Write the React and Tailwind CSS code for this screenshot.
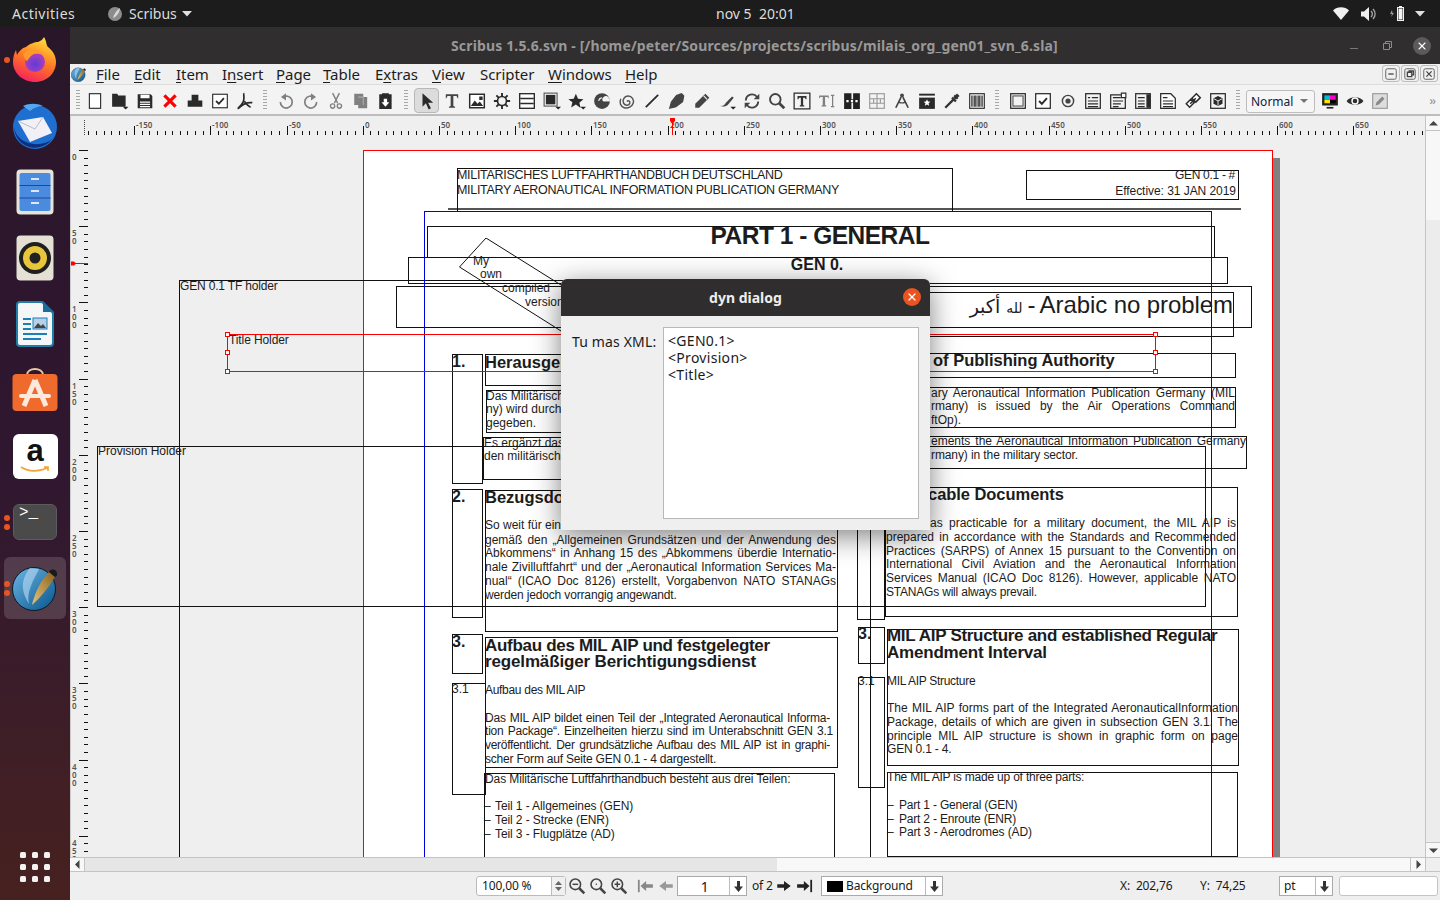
import { X } from 'lucide-react'

const ORIGIN_X = 88
const ORIGIN_Y = 135
const UI_FONT = "font-['Noto_Sans',sans-serif]"
const DOC_FONT = "font-['Liberation_Sans','DejaVu_Sans',sans-serif]"

// frames on the page: x1, y1, x2, y2
const FRAMES = [
  [457, 168, 952, 211], [1026, 170, 1238, 199], [427, 226, 1214, 257], [408, 257, 1227, 283],
  [396, 286, 1251, 327], [700, 292, 1233, 336], [179, 280, 870, 1000], [97, 446, 1205, 606],
  [452, 354, 482, 483], [485, 354, 700, 385], [700, 353, 1235, 377], [486, 390, 700, 432],
  [483, 437, 700, 479], [700, 387, 1235, 427], [700, 436, 1246, 468],
  [452, 489, 482, 617], [485, 490, 837, 631], [452, 634, 482, 673], [485, 637, 837, 767],
  [452, 683, 485, 794], [484, 773, 834, 1000],
  [857, 489, 884, 619], [885, 487, 1237, 616], [858, 627, 884, 663], [887, 629, 1238, 765],
  [858, 677, 884, 787], [887, 772, 1237, 856],
]

// text on the page: x, centre y, text, size, extra
const TEXTS = [
  [457, 175, 'MILITARISCHES LUFTFAHRTHANDBUCH DEUTSCHLAND', 12.5, { ls: '-0.3px' }],
  [457, 190, 'MILITARY AERONAUTICAL INFORMATION PUBLICATION GERMANY', 12.5, { ls: '-0.31px' }],
  [1026, 174.5, 'GEN 0.1 - #', 12, { right: 1235, ls: '-0.3px' }],
  [1026, 190.5, 'Effective: 31 JAN 2019', 12, { right: 1236, ls: '-0.05px' }],
  [600, 235, 'PART 1 - GENERAL', 24.5, { center: 820, bold: true, ls: '-0.5px' }],
  [600, 265, 'GEN 0.', 16, { center: 817, bold: true }],
  [473, 261, 'My', 12], [480, 274, 'own', 12], [502, 288, 'compiled', 12], [525, 302, 'version', 12],
  [180, 286, 'GEN 0.1 TF holder', 12, { ls: '-0.17px' }],
  [229, 340, 'Title Holder', 12, { ls: '-0.1px' }],
  [98, 451, 'Provision Holder', 12, { ls: '0px' }],
  [452, 362, '1.', 16, { bold: true }],
  [485, 362, 'Herausgeber', 16.5, { bold: true }],
  [933, 360.5, 'of Publishing Authority', 16.5, { bold: true, ls: '0px' }],
  [486, 396, 'Das Militärische', 12], [486, 409, 'ny) wird durch', 12], [486, 423, 'gegeben.', 12],
  [484, 443, 'Es ergänzt das', 12], [484, 456, 'den  militärische', 12],
  [931, 393, 'ary Aeronautical Information Publication Germany (MIL', 12, { to: 1235 }],
  [931, 406, 'rmany) is issued by the Air Operations Command', 12, { to: 1235 }],
  [931, 420, 'ftOp).', 12],
  [931, 441, 'ements the Aeronautical Information Publication Germany', 12, { to: 1246 }],
  [931, 455, 'rmany) in the military sector.', 12, { ls: '-0.1px' }],
  [452, 497, '2.', 16, { bold: true }],
  [485, 497, 'Bezugsdok', 16.5, { bold: true }],
  [485, 525, 'So weit für eine', 12],
  [485, 540, 'gemäß den „Allgemeinen Grundsätzen und der Anwendung des', 12, { to: 836 }],
  [485, 553, 'Abkommens“ in Anhang 15 des „Abkommens überdie Internatio-', 12, { to: 836 }],
  [485, 567, 'nale Zivilluftfahrt“ und der „Aeronautical Information Services Ma-', 12, { to: 836 }],
  [485, 581, 'nual“ (ICAO Doc 8126) erstellt, Vorgabenvon NATO STANAGs', 12, { to: 836 }],
  [485, 595, 'werden jedoch vorrangig angewandt.', 12, { ls: '-0.15px' }],
  [452, 642, '3.', 16, { bold: true }],
  [485, 645, 'Aufbau des MIL AIP und festgelegter', 17, { bold: true, ls: '-0.3px' }],
  [485, 661.5, 'regelmäßiger Berichtigungsdienst', 17, { bold: true, ls: '-0.15px' }],
  [452, 689, '3.1', 12],
  [485, 690, 'Aufbau des MIL AIP', 12, { ls: '-0.3px' }],
  [485, 718, 'Das MIL AIP bildet einen Teil der „Integrated Aeronautical Informa-', 12, { to: 830, ls: '-0.2px' }],
  [485, 731, 'tion Package“. Einzelheiten hierzu sind im Unterabschnitt GEN 3.1', 12, { to: 833, ls: '-0.2px' }],
  [485, 745, 'veröffentlicht. Der grundsätzliche Aufbau des MIL AIP ist in graphi-', 12, { to: 830, ls: '-0.3px' }],
  [485, 759, 'scher Form auf Seite GEN 0.1 - 4 dargestellt.', 12, { ls: '-0.2px' }],
  [485, 779, 'Das Militärische Luftfahrthandbuch besteht aus drei Teilen:', 12, { ls: '-0.1px' }],
  [484, 806, '–', 12], [495, 806, 'Teil 1 - Allgemeines (GEN)', 12, { ls: '-0.1px' }],
  [484, 820, '–', 12], [495, 820, 'Teil 2 - Strecke (ENR)', 12, { ls: '-0.1px' }],
  [484, 834, '–', 12], [495, 834, 'Teil 3 - Flugplätze (AD)', 12, { ls: '-0.1px' }],
  [928, 494.5, 'cable Documents', 16.5, { bold: true, ls: '-0.05px' }],
  [930, 523, 'as practicable for a military document, the MIL AIP is', 12, { to: 1236 }],
  [886, 537, 'prepared in   accordance with the Standards and Recommended', 12, { to: 1236 }],
  [886, 551, 'Practices (SARPS) of Annex 15 pursuant to the Convention on', 12, { to: 1236 }],
  [886, 564, 'International Civil Aviation and the Aeronautical Information', 12, { to: 1236 }],
  [886, 578, 'Services Manual (ICAO Doc 8126). However, applicable NATO', 12, { to: 1236 }],
  [886, 592, 'STANAGs will always prevail.', 12, { ls: '-0.2px' }],
  [858, 634, '3.', 16, { bold: true }],
  [887, 635.5, 'MIL AIP Structure and established Regular', 17, { bold: true, ls: '-0.3px' }],
  [887, 652, 'Amendment Interval', 17, { bold: true, ls: '-0.2px' }],
  [858, 681, '3.1', 12],
  [887, 681, 'MIL AIP Structure', 12, { ls: '-0.3px' }],
  [887, 708, 'The MIL AIP forms part of the Integrated AeronauticalInformation', 12, { to: 1238 }],
  [887, 722, 'Package, details of which are given in subsection GEN 3.1. The', 12, { to: 1238 }],
  [887, 736, 'principle MIL AIP structure is shown in graphic form on page', 12, { to: 1238 }],
  [887, 749, 'GEN 0.1 - 4.', 12, { ls: '-0.2px' }],
  [887, 777, 'The MIL AIP is made up of three parts:', 12, { ls: '-0.2px' }],
  [887, 805, '–', 12], [899, 805, 'Part 1 - General (GEN)', 12, { ls: '-0.2px' }],
  [887, 819, '–', 12], [899, 819, 'Part 2 - Enroute (ENR)', 12, { ls: '-0.2px' }],
  [887, 832, '–', 12], [899, 832, 'Part 3 - Aerodromes (AD)', 12, { ls: '-0.1px' }],
]

const HANDLES = [[227, 334], [227, 352], [227, 371], [1155, 334], [1155, 352], [1155, 371]]

const MENU = [
  ['', 'F', 'ile', 'w-[38px]'], ['', 'E', 'dit', 'w-[42px]'], ['', 'I', 'tem', 'w-[46px]'], ['I', 'n', 'sert', 'w-[54px]'],
  ['', 'P', 'age', 'w-[47px]'], ['', 'T', 'able', 'w-[52px]'], ['E', 'x', 'tras', 'w-[57px]'], ['', 'V', 'iew', 'w-[48px]'],
  ['Scripter', '', '', 'w-[68px]'], ['', 'W', 'indows', 'w-[77px]'], ['', 'H', 'elp', 'w-[40px]'],
]

const Drop = ({ x = 11, y = 13 }) => <path d={`M${x} ${y}h5l-2.5 2.5z`} fill="#222" />

const Svg = ({ children, size = 18 }) => (
  <svg width={size} height={size} viewBox="0 0 16 16" fill="none">{children}</svg>
)

const dk = '#2a2a2a'
const gr = '#808080'

// toolbar icons, in picture order
const TOOLS_A = [
  <rect x="3" y="1.5" width="10" height="13" fill="#fff" stroke={dk} />,
  <><path d="M1 1.5h4.5l1 1.5H13v10H1z" fill={dk} /><Drop x={10.5} y={13} /></>,
  <><path d="M1.5 2H13l1.5 1.5v11h-13z" fill={dk} /><path d="M4 2.5h8v3H4zM3.5 8.5h9v1h-9zM3.5 10.5h9v1h-9zM3.5 12.5h9v1h-9z" fill="#fff" /></>,
  <path d="M3 3l10 10M13 3L3 13" stroke="#f00" strokeWidth="2.8" />,
  <path d="M5 2.5h6v5h3.5V13h-13V7.5H5z" fill={dk} />,
  <><rect x="1.5" y="2" width="13" height="12" fill="#fff" stroke={dk} /><path d="M4.5 8L7 10.5l4.5-5" stroke={dk} strokeWidth="1.6" /></>,
  <path d="M7.500 1.500c-1.500 0 .5 3.500-1 7S1.500 14 2 14.500s4-6 12.500-5M7.500 8c1 2.500 4 5 5.500 5.500" stroke={dk} strokeWidth="1.5" />,
]
const TOOLS_B = [
  <><path d="M5 4.800a5.300 5.300 0 1 1-2 4" stroke={gr} strokeWidth="1.5" /><path d="M8 1v6.500L3.500 4.500z" fill={gr} /></>,
  <><path d="M11 4.800a5.300 5.300 0 1 0 2 4" stroke={gr} strokeWidth="1.5" /><path d="M8 1v6.500l4.500-3z" fill={gr} /></>,
  <><path d="M5 1l4.500 9M11 1L6.500 10" stroke={gr} strokeWidth="1.3" /><circle cx="5" cy="12.5" r="1.9" stroke={gr} strokeWidth="1.2" /><circle cx="11" cy="12.5" r="1.9" stroke={gr} strokeWidth="1.2" /></>,
  <><path d="M2 1.500h8v3h3.500V14.500h-8v-3H2z" fill={gr} /><path d="M5.500 4.500H10v7" stroke="#aaa" /></>,
  <><path d="M2 2h2.500V1h6v1H13v13H2z" fill={dk} /><path d="M6 6h3v3h2l-3.500 4L4 9h2z" fill="#fff" /></>,
]
const TOOLS_C = [
  <path d="M4 1l9.500 8.500H9l2.500 5-2 1L7 10l-3 3z" fill={dk} />,
  <path d="M2.500 2h11v3.500H13L12 3.500H9.200v9l1.500.5v1H5.300v-1l1.500-.5v-9H4L3 5.500h-.5z" fill="#444" />,
  <><rect x="1.5" y="2" width="13" height="12" fill="#fff" stroke={dk} strokeWidth="1.3" /><path d="M2.500 12.500l3.500-5 2.500 3 2-2 3 4zM10 4h3v3h-3z" fill={dk} /></>,
  <><circle cx="8" cy="8" r="4" stroke={dk} strokeWidth="1.5" /><path d="M8 .8v3M8 12.200v3M.8 8h3M12.200 8h3M3 3l2 2M11 11l2 2M13 3l-2 2M3 13l2-2" stroke={dk} strokeWidth="1.7" /></>,
  <><rect x="1.5" y="1.5" width="13" height="13" fill="#fff" stroke={dk} strokeWidth="1.2" /><path d="M2 5.800h12M2 10.200h12" stroke={dk} strokeWidth="1.2" /></>,
  <><rect x="1" y="1" width="11.5" height="11.5" fill="#fff" stroke="#555" /><rect x="2.5" y="2.5" width="8.500" height="8.500" fill={dk} /><Drop x={11} y={13} /></>,
  <><path d="M7 1.500l1.900 4.500 4.800.4-3.600 3.100 1.100 4.700L7 11.200l-4.200 2.500 1.100-4.700L.3 6.400 5.100 6z" fill={dk} /><Drop x={11} y={13} /></>,
  <><circle cx="8" cy="8" r="7" fill="#444" /><path d="M9 8a2.500 2.500 0 0 1 5-2.500L15 8zM8 5a3 3 0 0 0-3 3" fill="#f3f3f3" stroke="#f3f3f3" strokeWidth=".8" /></>,
  <path d="M8 8.500c.8-1.500 3-.5 2.500 1.500s-4 2.500-5.500 0S5.500 3.500 9 3.500s5.500 3.500 4.500 6.500S9 15 5.500 14 1 9 2.500 6" stroke="#555" strokeWidth="1.3" />,
  <path d="M2.500 13.500l11-11" stroke={dk} strokeWidth="1.6" />,
  <path d="M14 3.500L12 1.500 7.500 3 3 9l-1.500 5.500L7 13l6-4.500z" fill="#444" stroke="#444" />,
  <><path d="M11 1.500L14.500 5l-9 9H2v-3.500z" fill="#444" /><path d="M9.500 3.500l3 3" stroke="#f3f3f3" /></>,
  <><path d="M1.500 12c2 1 4 0 5.500-2.500L12.500 4 14 5l-5 6c-2 2-5 2.500-7.500 1z" fill="#444" /><Drop x={11} y={13} /></>,
  <><path d="M2.500 7.500A5.500 5.500 0 0 1 12.500 4.500M13.500 8.500A5.500 5.500 0 0 1 3.500 11.500" stroke="#444" strokeWidth="1.7" /><path d="M14.500 1.500v5h-5zM1.500 14.500v-5h5z" fill="#444" /></>,
  <><circle cx="6.5" cy="6.5" r="4.700" stroke="#444" strokeWidth="1.7" /><path d="M10 10l4.500 4.500" stroke="#444" strokeWidth="2.4" /></>,
  <><rect x="1" y="1" width="14" height="14" stroke={dk} strokeWidth="1.1" /><path d="M4 3.500h8v3h-.7L10.500 5H9v6.500l1 .5v.8H6V12l1-.5V5H5.500l-.8 1.500H4z" fill="#333" /></>,
  <><path d="M1 3h8.500v2.500H9L8.500 4.500H6.300v7l1 .5v.8H3.200V12l1-.5v-7H2L1.500 5.500H1z" fill={gr} /><path d="M11.500 3h3M13 3v10M11.500 13h3" stroke={gr} strokeWidth="1.1" /></>,
  <><path d="M1 1h6.500v5.500H9V1h6v14H9V9.500H7.500V15H1z" fill="#222" /><path d="M3 7h2v2H3zM7 7h2v2H7zM11 7h2v2h-2z" fill="#fff" /></>,
  <><rect x="1.5" y="1.5" width="13" height="13" stroke="#999" /><path d="M8 1.500v13M1.500 6h13M1.500 10h13M5 6v4M11 6v4" stroke="#999" /></>,
  <><circle cx="8" cy="3" r="1.7" fill="#444" /><path d="M7.200 4.500L2.500 14M8.800 4.500l4.700 9.500" stroke="#444" strokeWidth="1.5" /><path d="M5 9c2 1 4 1 6 0" stroke="#444" /></>,
  <><path d="M1 1.500h14v1.700H1z" fill={dk} /><path d="M1 5h14v10H1z" fill={dk} /><path d="M8 6.500l.9 2 2.100.2-1.600 1.400.5 2.100L8 11l-1.900 1.200.5-2.100L5 8.700l2.100-.2z" fill="#fff" /></>,
  <><path d="M10 3l3 3M8 5l3.500 3.500M9 7l-7 7" stroke="#333" strokeWidth="2" /><path d="M10 5l2.500-3L14 3.500 11 6z" fill="#333" stroke="#333" /></>,
  <><rect x="1.5" y="1.5" width="13" height="13" stroke={dk} /><path d="M3.500 3v10M5.500 3v10M7 3v10M9 3v10M10.500 3v10M12.500 3v10" stroke={dk} strokeWidth="1.1" /></>,
]
const Lines = ({ d }) => <path d={d} stroke={dk} strokeWidth="1.1" />
const TOOLS_D = [
  <><rect x="1.5" y="1.5" width="13" height="13" stroke={dk} strokeWidth="1.1" /><rect x="3.5" y="3.5" width="9" height="9" stroke="#555" /></>,
  <><rect x="1.5" y="1.5" width="13" height="13" fill="#fff" stroke={dk} strokeWidth="1.1" /><path d="M4.500 8L7 10.500l4.500-5" stroke={dk} strokeWidth="1.7" /></>,
  <><circle cx="8" cy="8" r="5" stroke="#444" strokeWidth="1.3" /><circle cx="8" cy="8" r="2.3" fill="#444" /></>,
  <><rect x="1.5" y="1.5" width="13" height="13" stroke={dk} strokeWidth="1.1" /><Lines d="M3.500 5h2M7 5h5.500M3.500 8h9M3.500 10.500h9M3.500 13h9" /></>,
  <><path d="M1.500 2.500h13v12h-13z" stroke={dk} strokeWidth="1.1" /><path d="M11 1h4v4h-4z" fill="#fff" stroke={dk} /><Lines d="M3.500 5h7M3.500 8h9M3.500 10.500h7M3.500 13h5" /></>,
  <><rect x="1.5" y="1.5" width="13" height="13" stroke={dk} strokeWidth="1.1" /><path d="M11 2h3.500v12H11z" fill={dk} /><Lines d="M3.500 5h6M3.500 8h6M3.500 10.500h6M3.500 13h6" /></>,
  <><path d="M1.500 1.500h9l4 4v9h-13z" fill="#fff" stroke={dk} strokeWidth="1.1" /><Lines d="M3.500 5h4M3.500 8h9M3.500 10.500h9M3.500 13h9" /></>,
  <><path d="M2 10.500l4-4 3 3-4 4zM7 5.500l4-4L14.500 5l-4 4z" fill="#fff" stroke={dk} strokeWidth="1.3" /><path d="M5.500 10.500l5-5" stroke={dk} strokeWidth="1.3" /></>,
  <><rect x="1.5" y="1.5" width="13" height="13" stroke={dk} strokeWidth="1.1" /><path d="M8 3.500l4 2v5l-4 2-4-2v-5z" fill={dk} /><path d="M4.500 6L8 8l3.500-2M8 8v4" stroke="#fff" strokeWidth=".8" /></>,
]

const Tool = ({ children, active }) => (
  <div className={`w-[25px] h-[25px] flex items-center justify-center rounded-sm ${active ? 'bg-[#dcdcdc] border border-[#b8b8b8]' : ''}`}>
    <Svg>{children}</Svg>
  </div>
)

const Grip = () => (
  <div className="w-[16px] h-full flex justify-center">
    <div className="w-[4px] h-[22px] mt-[2px] bg-[radial-gradient(#a8a8a8_0.7px,transparent_0.8px)] bg-[length:2px_3px]" />
  </div>
)

function HRuler() {
  const ticks = []
  for (let i = -36; i < 140; i++) {
    const x = 362.7 + i * 7.62 - 70
    if (x < 18) continue
    const major = i % 10 === 0
    ticks.push(<path key={i} d={`M${Math.round(x) + 0.5} ${major ? 10 : 15}V19`} stroke="#111" />)
    if (major) ticks.push(<text key={`t${i}`} x={Math.round(x) + 2} y={11.5} fontSize="8" fontWeight="600" fill="#555" fontFamily="Noto Sans">{i * 5}</text>)
  }
  return (
    <svg width="1355" height="19" className="block">
      <path d="M14.500 4V19" stroke="#444" strokeDasharray="1 1" />
      <path d="M0.500 0V19" stroke="#ccc" />
      {ticks}
      <path d="M602.500 2V19" stroke="#f00" />
      <path d="M600 2h5v3l-2 2h-1l-2-2z" fill="#f00" />
    </svg>
  )
}

function VRuler() {
  const ticks = []
  for (let i = 0; i < 96; i++) {
    const y = i * 7.62 + 15
    const major = i % 10 === 0
    ticks.push(<path key={i} d={`M${major ? 9 : 14} ${Math.round(y) + 0.5}H18`} stroke="#111" />)
    if (major) {
      String(i * 5).split('').forEach((d, k) => {
        ticks.push(<text key={`t${i}${k}`} x="2" y={y + 10 + k * 8} fontSize="8" fontWeight="600" fill="#555" fontFamily="Noto Sans">{d}</text>)
      })
    }
  }
  return (
    <svg width="18" height="722" className="block shrink-0 bg-[#efefef]">
      <path d="M0.500 0V722" stroke="#ccc" />
      {ticks}
      <path d="M1 128.500H18" stroke="#f00" />
      <path d="M1 126.500h3l2 2-2 2H1z" fill="#f00" />
    </svg>
  )
}

function DocText({ t }) {
  const [x, y, text, size, o = {}] = t
  const h = Math.ceil(size) + 8
  // left, width and top come from the TEXTS table
  const style = { left: x - ORIGIN_X, top: y - h / 2 - ORIGIN_Y, height: h, lineHeight: `${h}px`, fontSize: size, letterSpacing: o.ls }
  let cls = 'absolute text-[#1c1c1c] whitespace-nowrap'
  if (o.bold) cls += ' font-bold'
  if (o.to) { style.width = o.to - x; cls += ' whitespace-normal overflow-hidden text-justify [text-align-last:justify]' }
  if (o.right) { style.left = undefined; style.right = 1337 - (o.right - ORIGIN_X) }
  if (o.center) { style.left = o.center - ORIGIN_X; style.transform = 'translateX(-50%)' }
  return <div className={cls} style={style}>{text}</div>
}

function Dialog() {
  return (
    <div className={`absolute left-[473px] top-[144px] w-[369px] h-[251px] flex flex-col rounded-t-md bg-[#efefef] shadow-[0_6px_28px_rgba(0,0,0,0.5)] ${UI_FONT}`}>
      <div className="relative h-[37px] shrink-0 rounded-t-md bg-[#2f2d2d] flex items-center justify-center">
        <span className="text-[14px] font-bold text-[#eeeeee]">dyn dialog</span>
        <div className="absolute right-[9px] top-[9px] w-[18px] h-[18px] rounded-full bg-[#e95420] flex items-center justify-center">
          <X size={12} strokeWidth={2.5} className="text-white" />
        </div>
      </div>
      <div className="flex flex-1 p-[11px]">
        <span className="w-[91px] text-[14px] leading-[17px] pt-[6px] text-[#1a1a1a] tracking-[0.15px] whitespace-nowrap">Tu mas XML:</span>
        <div className="w-[256px] h-[192px] bg-white border border-[#b8b8b8] px-[4px] pt-[4px] text-[14px] leading-[17px] tracking-[0.3px] text-[#1a1a1a]">
          <div>&lt;GEN0.1&gt;</div>
          <div>&lt;Provision&gt;</div>
          <div>&lt;Title&gt;</div>
        </div>
      </div>
    </div>
  )
}

function Canvas() {
  return (
    <div className={`relative flex-1 h-[722px] bg-[#efefef] overflow-hidden ${DOC_FONT}`}>
      {/* page */}
      <div className="absolute left-[282px] top-[23px] w-[910px] h-[800px] bg-[#808080]" />
      <div className="absolute left-[275px] top-[15px] w-[910px] h-[800px] bg-white border border-[#f00]" />
      <div className="absolute left-[360px] top-[73px] w-[793px] h-[2px] bg-[#555]" />
      {FRAMES.map((f, i) => (
        <div key={i} className="absolute border border-[#111]" style={{ left: f[0] - ORIGIN_X, top: f[1] - ORIGIN_Y, width: f[2] - f[0] + 1, height: f[3] - f[1] + 1 }} />
      ))}
      <svg className="absolute left-[371px] top-[103px]" width="110" height="100" fill="none">
        <path d="M27 0L0.500 29L110 98M27 0L110 52" stroke="#111" />
      </svg>
      <div className="absolute left-[336px] top-[76px] w-[788px] h-[800px] border border-[#0000d8] border-b-0" />
      {TEXTS.map((t, i) => <DocText key={i} t={t} />)}
      {/* separate items so the bidi order stays as drawn */}
      <div className="absolute right-[192px] top-[152px] h-[36px] flex items-baseline leading-[36px] text-[#1c1c1c] whitespace-nowrap">
        <span className="text-[19px]">أكبر</span>
        <span className="ml-[6px] text-[14px]">لله</span>
        <span className="ml-[5px] text-[24px]">-</span>
        <span className="ml-[4px] text-[24px] tracking-[-0.08px]">Arabic no problem</span>
      </div>
      {/* selected frame */}
      <div className="absolute left-[139px] top-[199px] w-[929px] h-[38px] border border-[#f00]" />
      {HANDLES.map(([x, y]) => (
        <div key={`${x}${y}`} className="absolute w-[5px] h-[5px] bg-white border border-[#f00]" style={{ left: x - 2 - ORIGIN_X, top: y - 2 - ORIGIN_Y }} />
      ))}
      <Dialog />
    </div>
  )
}

function TopBar() {
  return (
    <div className={`h-[27px] shrink-0 bg-[#1c1c1c] flex items-center text-[14px] text-[#dcdcdc] relative ${UI_FONT}`}>
      <span className="ml-[12px] w-[95px] tracking-[0.5px]">Activities</span>
      <svg width="16" height="16" viewBox="0 0 16 16"><circle cx="8" cy="8" r="7" fill="#8c8c8c" /><path d="M6 12c1-4 3-7 7-10-.5 4-2.500 8-7 10z" fill="#d8d8d8" /></svg>
      <span className="ml-[6px]">Scribus</span>
      <svg className="ml-[5px]" width="10" height="6"><path d="M0 0h10L5 5.500z" fill="#e0e0e0" /></svg>
      <span className="absolute left-[716px]">nov 5&nbsp;&nbsp;20:01</span>
      <div className="ml-auto flex items-center pr-[15px]">
        <svg width="16" height="13" viewBox="0 0 16 13"><path d="M0 3.500C4 -.8 12 -.8 16 3.500L8 13z" fill="#f0f0f0" /></svg>
        <svg className="ml-[12px]" width="16" height="14" viewBox="0 0 16 14"><path d="M0 4.500h3L8 0v14L3 9.500H0z" fill="#f0f0f0" /><path d="M10 4a4 4 0 0 1 0 6M12 2a7 7 0 0 1 0 10" stroke="#aaa" strokeWidth="1.3" fill="none" /></svg>
        <svg className="ml-[13px]" width="16" height="15" viewBox="0 0 16 15"><path d="M2 4L0 8h2l-1 3 3-4H2.500z" fill="#999" /><path d="M7 1h2V0h3v1h2v14H7z" fill="#f2f2f2" /><path d="M8 2h5v12H8z" fill="#1c1c1c" /><path d="M8.500 2.500h4v11h-4z" fill="#f2f2f2" /></svg>
        <svg className="ml-[9px]" width="10" height="6"><path d="M0 0h10L5 5.500z" fill="#e0e0e0" /></svg>
      </div>
    </div>
  )
}

const DockIcon = ({ children, dots = 0, active }) => (
  <div className="relative h-[66px] flex items-center justify-center">
    {active && <div className="absolute left-[4px] top-[2px] w-[62px] h-[62px] rounded-md bg-[#ffffff26]" />}
    {dots > 0 && (
      <div className="absolute left-[4px] flex flex-col gap-[3px]">
        {Array.from({ length: dots }).map((_, i) => <div key={i} className="w-[6px] h-[6px] rounded-full bg-[#e95420]" />)}
      </div>
    )}
    <div className="relative">{children}</div>
  </div>
)

function ScribusLogo({ size }) {
  return (
    <svg width={size} height={size} viewBox="0 0 46 46">
      <defs>
        <linearGradient id="sb" x1="0" y1="0" x2="1" y2="1"><stop offset="0" stopColor="#6fb6e6" /><stop offset="1" stopColor="#05558c" /></linearGradient>
        <linearGradient id="sg" x1="0" y1="1" x2="1" y2="0"><stop offset="0" stopColor="#e8c27a" /><stop offset="1" stopColor="#8a6420" /></linearGradient>
      </defs>
      <circle cx="22" cy="24" r="21.5" fill="url(#sb)" stroke="#0b1a28" strokeWidth="1" />
      <path d="M18 3c-6 8-12 18-1 36C14 27 22 14 27 4z" fill="#bcdcf4" opacity="0.6" />
      <path d="M20 40c2-10 8-24 17-33l6 5c-6 10-14 20-23 28z" fill="url(#sg)" />
      <path d="M37 7c1-3 5-3 7-1s1 6-1 6z" fill="#1a1a1a" />
    </svg>
  )
}

function Dock() {
  return (
    <div className="w-[70px] shrink-0 flex flex-col bg-gradient-to-b from-[#2a1629] via-[#2f1730] to-[#47211f]">
      <DockIcon dots={1}>
        <svg width="48" height="48" viewBox="0 0 48 48">
          <defs>
            <linearGradient id="ff" x1="0.7" y1="0" x2="0.3" y2="1"><stop offset="0" stopColor="#ffe23a" /><stop offset="0.5" stopColor="#ff7a22" /><stop offset="1" stopColor="#f5205f" /></linearGradient>
            <radialGradient id="ffp" cx="0.5" cy="0.6"><stop offset="0" stopColor="#5d3cd6" /><stop offset="1" stopColor="#a93ec0" /></radialGradient>
          </defs>
          <path d="M33 1c3 5 2 8 4 10 4 3 8 8 8 15 0 11-9 20-21 20S2 37 2 26c0-5 1-8 3-12l1 5c2-4 5-7 9-8 3-3 9-5 12-5 3-1 5-3 6-5z" fill="url(#ff)" />
          <circle cx="24" cy="26" r="10" fill="url(#ffp)" />
          <path d="M12 18c3-3 8-5 13-4 5 0 9 4 10 7-3-3-8-4-12-3-2 1-3 2-4 3l-3 4c-2-1-3-4-4-7z" fill="#ff9a2a" />
        </svg>
      </DockIcon>
      <DockIcon>
        <svg width="48" height="48" viewBox="0 0 48 48">
          <circle cx="24" cy="25" r="22" fill="#1f6fd0" />
          <path d="M3 25a21 21 0 0 0 38 12c-5 5-17 7-26 3S4 30 3 25z" fill="#0e2f7f" />
          <path d="M12 4c6-3 14-3 20 0-5 0-10 2-13 5z" fill="#53a8f0" />
          <path d="M7 19l25-4 9 16-22 9z" fill="#f0f0f6" />
          <path d="M7 19l17 8 8-12" stroke="#b8bccb" fill="none" />
        </svg>
      </DockIcon>
      <DockIcon>
        <svg width="38" height="46" viewBox="0 0 38 46">
          <rect x="0.5" y="0.5" width="37" height="45" rx="4" fill="#e6e3d8" />
          <rect x="3.5" y="4" width="31" height="38" rx="2" fill="#4a8be0" />
          <path d="M3.500 16.500h31M3.500 29h31" stroke="#1d4a94" strokeWidth="1" />
          <path d="M15 10h8M15 22h8M15 34h8" stroke="#dce6f4" strokeWidth="2" />
        </svg>
      </DockIcon>
      <DockIcon>
        <svg width="38" height="46" viewBox="0 0 38 46">
          <rect x="0.5" y="0.5" width="37" height="45" rx="4" fill="#e4e0d4" />
          <circle cx="19" cy="23" r="16" fill="#1f1f1f" />
          <circle cx="19" cy="23" r="12" fill="#e8c63c" />
          <circle cx="19" cy="23" r="5.5" fill="#222" />
        </svg>
      </DockIcon>
      <DockIcon>
        <svg width="38" height="46" viewBox="0 0 38 46">
          <path d="M4 1h22l11 11v30a3 3 0 0 1-3 3H4a3 3 0 0 1-3-3V4a3 3 0 0 1 3-3z" fill="#f4f6f8" stroke="#1f7fa8" strokeWidth="2" />
          <path d="M27 0l11 11H27z" fill="#1b6e99" />
          <path d="M7 17h8v2H7zM7 22h8v2H7zM7 27h8v2H7zM7 32h24v2H7zM7 37h18v2H7z" fill="#1c7fb8" />
          <rect x="17" y="17" width="14" height="11" fill="#b7d0e6" stroke="#1c7fb8" />
          <path d="M18 27l4-5 3 3 2-2 3 4z" fill="#444" />
        </svg>
      </DockIcon>
      <DockIcon>
        <svg width="46" height="44" viewBox="0 0 46 44">
          <path d="M15 7c0-8 16-8 16 0" stroke="#e8c9a0" strokeWidth="2" fill="none" />
          <rect x="0.5" y="6" width="45" height="37" rx="4" fill="#ef6a2d" />
          <path d="M23 12L12 38M23 12l11 26" stroke="#fde8dc" strokeWidth="5" />
          <path d="M9 28h28" stroke="#fde8dc" strokeWidth="4" strokeLinecap="round" />
        </svg>
      </DockIcon>
      <DockIcon>
        <div className="w-[45px] h-[45px] rounded-md bg-white flex flex-col items-center justify-start overflow-hidden">
          <span className="font-['Liberation_Sans',sans-serif] font-bold text-[31px] leading-[32px] text-[#111] mt-[1px]">a</span>
          <svg width="30" height="8" viewBox="0 0 30 8" className="-mt-[1px]"><path d="M1 1c8 5 18 5 26 1M24 1h4v4" stroke="#f2a33a" strokeWidth="1.6" fill="none" /></svg>
        </div>
      </DockIcon>
      <DockIcon dots={2}>
        <div className="w-[44px] h-[36px] rounded-md bg-[#4a4a4a] border border-[#5c5c5c] px-[5px] text-white font-['Liberation_Mono',monospace] text-[16px] leading-[16px]">&gt;_</div>
      </DockIcon>
      <DockIcon dots={2} active>
        <ScribusLogo size={46} />
      </DockIcon>
      <div className="mt-auto mb-[18px] ml-[20px] grid grid-cols-3 gap-[6px] w-[30px]">
        {Array.from({ length: 9 }).map((_, i) => <div key={i} className="w-[6px] h-[6px] rounded-[1.5px] bg-[#f2f2f2]" />)}
      </div>
    </div>
  )
}

function TitleBar() {
  return (
    <div className={`relative h-[37px] shrink-0 bg-[#302e2e] flex items-center ${UI_FONT}`}>
      <span className="absolute left-[381px] text-[14px] font-bold text-[#989898] tracking-[0.15px] whitespace-nowrap">Scribus 1.5.6.svn - [/home/peter/Sources/projects/scribus/milais_org_gen01_svn_6.sla]</span>
      <div className="ml-auto flex items-center pr-[9px]">
        <div className="w-[8px] h-px bg-[#777] mt-[6px] mr-[25px]" />
        <svg className="mr-[21px]" width="9" height="9" viewBox="0 0 9 9"><path d="M2.500 2.500V.5h6v6h-2M.5 2.500h6v6h-6z" stroke="#8a8a8a" fill="none" /></svg>
        <div className="w-[18px] h-[18px] rounded-full bg-[#5c5a5a] flex items-center justify-center">
          <X size={12} strokeWidth={2.2} className="text-white" />
        </div>
      </div>
    </div>
  )
}

function MenuBar() {
  return (
    <div className={`relative h-[21px] shrink-0 bg-[#f0f0f0] flex items-center border-b border-[#dcdcdc] text-[15px] text-[#1c1c1c] ${UI_FONT}`}>
      <div className="ml-[1px] w-[25px]"><ScribusLogo size={15} /></div>
      <div className="flex tracking-[-0.05px]">
        {MENU.map(([a, u, b, w]) => (
          <span key={a + u + b} className={`leading-[20px] whitespace-nowrap ${w}`}>{a}<span className="underline underline-offset-2">{u}</span>{b}</span>
        ))}
      </div>
      <div className="absolute right-[2px] top-[1px] flex gap-[1px]">
        {['M5 8h6', 'M5 6h5v5H5zM7 6V4.500h5V9h-2', 'M5 5l6 6M11 5l-6 6'].map(d => (
          <div key={d} className="w-[18px] h-[17px] rounded-[3px] border border-[#bdbdbd] flex items-center justify-center">
            <svg width="14" height="14" viewBox="0 0 16 16"><rect x="2" y="2" width="12" height="12" rx="2" fill="none" stroke="#555" /><path d={d} stroke="#444" strokeWidth="1.5" fill="none" /></svg>
          </div>
        ))}
      </div>
    </div>
  )
}

function ToolBar() {
  return (
    <div className={`h-[31px] shrink-0 pt-[2px] bg-[#f3f3f3] border-b-2 border-[#bdbdbd] flex items-center pl-[4px] ${UI_FONT}`}>
      <div className="w-[8px] h-full flex justify-start"><Grip /></div>
      {TOOLS_A.map((c, i) => <Tool key={i}>{c}</Tool>)}
      <Grip />
      {TOOLS_B.map((c, i) => <Tool key={i}>{c}</Tool>)}
      <Grip />
      {TOOLS_C.map((c, i) => <Tool key={i} active={i === 0}>{c}</Tool>)}
      <Grip />
      {TOOLS_D.map((c, i) => <Tool key={i}>{c}</Tool>)}
      <Grip />
      <div className="w-[69px] h-[23px] mt-[1px] rounded-[3px] border border-[#bdbdbd] bg-[#f6f6f6] flex items-center pl-[4px] pr-[6px] text-[12px] text-[#14213d]">
        <span className="pt-[1px]">Normal</span>
        <svg className="ml-auto" width="8" height="5"><path d="M0 0h8L4 4z" fill="#777" /></svg>
      </div>
      <div className="w-[2px]" />
      <Tool>
        <rect x="1" y="1" width="14" height="11" fill="#222" />
        <path d="M3 3h5v4H3z" fill="#00bcd4" /><path d="M8 3h5v4H8z" fill="#ff00c8" /><path d="M3 7h5v3H3z" fill="#ffe600" /><path d="M8 7h5v3H8z" fill="#000" />
        <path d="M5 14h6" stroke="#222" strokeWidth="1.5" />
      </Tool>
      <Tool>
        <path d="M0.500 8C3 3.500 13 3.500 15.500 8 13 12.500 3 12.500 0.500 8z" fill="#2e2e2e" />
        <circle cx="8" cy="8" r="3.3" fill="#fff" /><circle cx="8" cy="8" r="2" fill="#2e2e2e" />
      </Tool>
      <Tool>
        <rect x="1.5" y="1.5" width="13" height="13" fill="#ddd" stroke="#999" />
        <path d="M4 12l1-3 5-5 2 2-5 5z" fill="#888" />
      </Tool>
      <span className="ml-auto mr-[5px] text-[12px] text-[#888] tracking-[-1px]">››</span>
    </div>
  )
}

const Arrow = ({ d }) => <svg width="9" height="9" viewBox="0 0 9 9"><path d={d} fill="#444" /></svg>

const StatusIcon = ({ children }) => (
  <svg width="18" height="18" viewBox="0 0 16 16" fill="none" className="shrink-0">{children}</svg>
)

const Lens = ({ sign }) => (
  <>
    <circle cx="6.5" cy="6.5" r="4.7" stroke="#444" strokeWidth="1.4" />
    <path d="M10 10l4.500 4.500" stroke="#444" strokeWidth="2.2" />
    <path d={sign} stroke="#444" strokeWidth="1.3" />
  </>
)

const DownBtn = () => (
  <div className="ml-auto w-[17px] h-full border-l border-[#bbb] flex items-center justify-center">
    <svg width="9" height="11" viewBox="0 0 9 11"><path d="M3 0h3v5.500h3L4.500 11 0 5.500h3z" fill="#333" /></svg>
  </div>
)

function StatusBar() {
  return (
    <div className={`h-[29px] shrink-0 bg-[#efefef] border-t border-[#c4c4c4] flex items-center pl-[406px] text-[12px] tracking-[-0.15px] text-[#1a1a1a] ${UI_FONT}`}>
      <div className="w-[90px] h-[20px] rounded-[3px] border border-[#bbb] bg-white flex items-center pl-[5px]">
        100,00 %
        <div className="ml-auto w-[14px] h-full border-l border-[#bbb] bg-[#f0f0f0] flex flex-col items-center justify-center gap-[2px]">
          <svg width="7" height="4"><path d="M0 4h7L3.500 0z" fill="#666" /></svg>
          <svg width="7" height="4"><path d="M0 0h7L3.500 4z" fill="#666" /></svg>
        </div>
      </div>
      <div className="flex items-center gap-[3px] ml-[2px]">
        <StatusIcon><Lens sign="M4 6.500h5" /></StatusIcon>
        <StatusIcon><Lens sign="M6 6.500h1" /></StatusIcon>
        <StatusIcon><Lens sign="M4 6.500h5M6.500 4v5" /></StatusIcon>
      </div>
      <div className="flex items-center gap-[3px] ml-[8px]">
        <StatusIcon><path d="M2.500 2.500v11" stroke="#888" strokeWidth="1.6" /><path d="M4 8l5-4.500V6.500h6v3H9v3z" fill="#888" /></StatusIcon>
        <StatusIcon><path d="M2 8l6-4.500V6.500h6v3H8v3z" fill="#999" /></StatusIcon>
      </div>
      <div className="ml-[2px] w-[70px] h-[20px] border border-[#aaa] bg-white flex items-center text-[14px]">
        <span className="w-[52px] text-center pl-[2px]">1</span>
        <DownBtn />
      </div>
      <span className="ml-[5px] w-[21px] whitespace-nowrap">of 2</span>
      <div className="flex items-center gap-[3px] ml-[2px]">
        <StatusIcon><path d="M14 8L8 3.500V6.500H2v3h6v3z" fill="#222" /></StatusIcon>
        <StatusIcon><path d="M13.500 2.500v11" stroke="#222" strokeWidth="1.6" /><path d="M12 8L7 3.500V6.500H1v3h6v3z" fill="#222" /></StatusIcon>
      </div>
      <div className="ml-[7px] w-[122px] h-[20px] border border-[#aaa] bg-white flex items-center pl-[5px]">
        <div className="w-[16px] h-[11px] bg-black mr-[3px]" />
        Background
        <DownBtn />
      </div>
      <span className="ml-[177px] w-[54px] whitespace-nowrap">X:&nbsp;&nbsp;202,76</span>
      <span className="ml-[26px] w-[46px] whitespace-nowrap">Y:&nbsp;&nbsp;74,25</span>
      <div className="ml-[33px] w-[54px] h-[20px] border border-[#aaa] bg-white flex items-center pl-[4px]">
        pt
        <DownBtn />
      </div>
      <div className="ml-[6px] w-[99px] h-[20px] rounded-[3px] border border-[#c4c4c4] bg-white" />
    </div>
  )
}

export default function App() {
  return (
    <div className="w-[1440px] h-[900px] flex flex-col overflow-hidden">
      <TopBar />
      <div className="flex flex-1 min-h-0">
        <Dock />
        <div className="flex-1 min-w-0 flex flex-col">
          <TitleBar />
          <MenuBar />
          <ToolBar />
          <div className="flex flex-1 min-h-0">
            <div className="flex-1 min-w-0 flex flex-col">
              <div className="h-[19px] shrink-0 bg-[#efefef]"><HRuler /></div>
              <div className="flex flex-1 min-h-0">
                <VRuler />
                <Canvas />
              </div>
            </div>
            <div className="w-[15px] shrink-0 flex flex-col border-l border-[#c4c4c4] bg-[#f7f7f7]">
              <div className="h-[15px] flex items-center justify-center border-b border-[#c4c4c4]"><Arrow d="M0 6.500h9L4.500 2z" /></div>
              <div className="h-[89px]" />
              <div className="flex-1 bg-[#ececec]" />
              <div className="h-[15px] flex items-center justify-center border-t border-[#c4c4c4]"><Arrow d="M0 2.500h9L4.500 7z" /></div>
            </div>
          </div>
          <div className="h-[14px] shrink-0 flex border-t border-[#c4c4c4] bg-[#f8f8f8]">
            <div className="w-[15px] border-r border-[#c4c4c4] flex items-center justify-center"><Arrow d="M6.500 0v9L2 4.500z" /></div>
            <div className="w-[692px] bg-[#e6e6e6]" />
            <div className="flex-1" />
            <div className="w-[15px] border-l border-[#c4c4c4] flex items-center justify-center"><Arrow d="M2.500 0v9L7 4.500z" /></div>
            <div className="w-[15px] border-l border-[#c4c4c4] bg-[#efefef]" />
          </div>
          <StatusBar />
        </div>
      </div>
    </div>
  )
}
